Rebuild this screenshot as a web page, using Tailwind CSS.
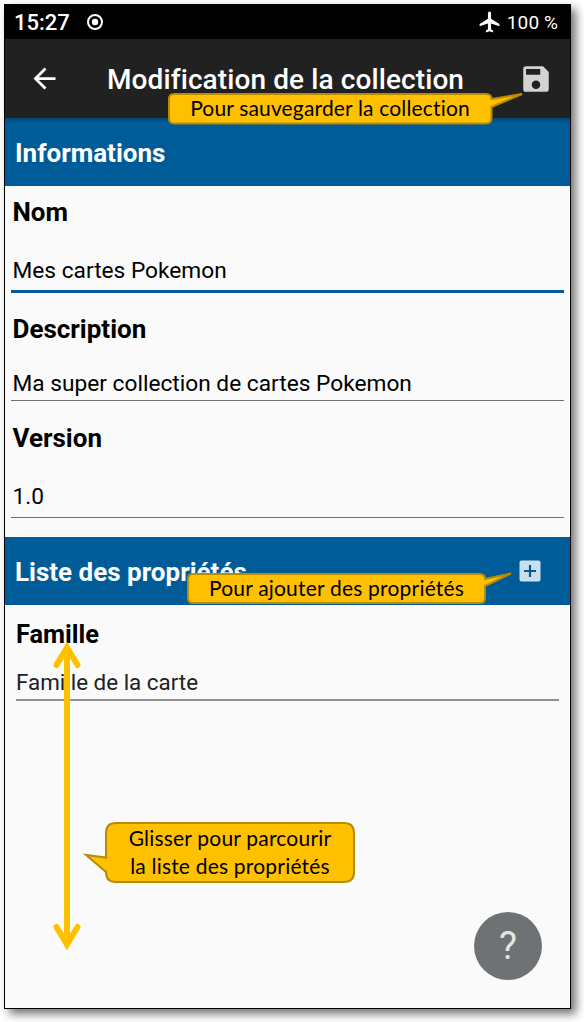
<!DOCTYPE html>
<html lang="fr">
<head>
<meta charset="utf-8">
<title>Modification de la collection</title>
<script src="https://cdn.jsdelivr.net/npm/@tailwindcss/browser@4"></script>
</head>
<body class="bg-white overflow-hidden">
<div class="relative w-[584px] h-[1022px] pl-1 pt-1 font-['Roboto',sans-serif] whitespace-nowrap">
  <main class="w-[567px] h-[1005px] flex flex-col border border-black bg-[#fafafa] shadow-[5px_5px_9px_rgba(0,0,0,0.55)] text-black">
    <div class="h-[34px] shrink-0 bg-black text-white flex items-center pl-[9px] pr-[12px]">
      <span class="text-[22px] leading-[28px] mt-[2px] font-medium w-[73px]">15:27</span>
      <svg class="w-4 h-4" viewBox="0 0 16 16"><circle cx="8" cy="8" r="7" fill="none" stroke="#fff" stroke-width="2"/><circle cx="8" cy="8" r="3.2" fill="#fff"/></svg>
      <svg class="w-[25px] h-[25px] ml-auto mr-[5px]" viewBox="0 0 24 24" fill="#fff"><path d="M21.5 15.5v-2l-8-5V3a1.5 1.5 0 0 0-3 0v5.500l-8 5v2l8-2.500V18.500L8.500 20v1.500l3.500-1 3.500 1V20l-2-1.500V13z"/></svg>
      <span class="text-[19px] leading-[28px] mt-[2px] tracking-[0.1px]">100 %</span>
    </div>
    <header class="h-[79px] shrink-0 bg-[#212121] text-white flex items-center pl-[23px] pr-[17px]">
      <svg class="w-[33px] h-[33px]" viewBox="0 0 24 24" fill="#fff"><path d="M20 11H7.830l5.590-5.590L12 4l-8 8 8 8 1.410-1.410L7.830 13H20v-2z"/></svg>
      <h1 class="ml-[46px] mt-[3px] text-[28px] leading-[32px] tracking-[0.1px] font-medium">Modification de la collection</h1>
      <svg class="ml-auto w-[34px] h-[34px]" viewBox="0 0 24 24"><path fill="#d3d3d3" d="M17 3H5a2 2 0 0 0-2 2v14a2 2 0 0 0 2 2h14a2 2 0 0 0 2-2V7zM12 19a3 3 0 1 1 0-6 3 3 0 0 1 0 6zM15 9H5V5h10z"/></svg>
    </header>
    <section>
      <h2 class="h-[67.5px] bg-[#005c99] bg-linear-to-b from-[#00487a] from-0% to-[#005c99] to-8% text-white font-bold text-[26px] leading-[70px] pl-[10px]">Informations</h2>
      <div class="px-[6px]">
        <h3 class="h-[52.5px] pl-[1.5px] font-bold text-[26px] leading-[52px]">Nom</h3>
        <p class="h-[55px] pl-[1.5px] text-[22.7px] leading-[65px] border-b-3 border-[#005c99]">Mes cartes Pokemon</p>
        <h3 class="h-[72px] pl-[1.5px] font-bold text-[26px] leading-[72px]">Description</h3>
        <p class="h-[36px] pl-[1.5px] text-[22.7px] leading-[38px] border-b border-[#707070]">Ma super collection de cartes Pokemon</p>
        <h3 class="h-[74px] pl-[1.5px] font-bold text-[26px] leading-[75px]">Version</h3>
        <p class="h-[43px] pl-[1.5px] text-[22.7px] leading-[43px] border-b border-[#707070]">1.0</p>
      </div>
    </section>
    <section class="mt-[19px]">
      <div class="h-[68px] bg-[#005c99] text-white flex items-center pl-[10px] pr-[29px]">
        <h2 class="font-bold text-[26px] leading-[68px] mt-px">Liste des propriétés</h2>
        <svg class="ml-auto w-[22px] h-[22px]" viewBox="0 0 22 22"><rect x=".5" y=".5" width="21" height="21" rx="2" fill="#ccdeeb"/><path d="M11 5v12M5 11h12" stroke="#005c99" stroke-width="2.200"/></svg>
      </div>
      <div class="px-[11px]">
        <h3 class="h-[56px] font-bold text-[25.4px] leading-[59px]">Famille</h3>
        <p class="h-[40px] text-[22.4px] leading-[42px] text-[#212121] border-b-2 border-[#909090]">Famille de la carte</p>
      </div>
    </section>
  </main>

  <!-- Help button -->
  <div class="absolute left-[474px] top-[912px] w-[68px] h-[68px] rounded-full bg-[#6e7274] text-[#e4e4e4] flex items-center justify-center text-[38px] font-normal">?</div>

  <!-- Callout shapes and scroll arrow -->
  <svg class="absolute left-0 top-0 w-[584px] h-[1022px]" viewBox="0 0 584 1022">
    <g fill="#ffc000" stroke="#b98b04" stroke-width="2">
      <path d="M174 94H486Q491.500 94 491.500 99L522 94L491.500 107V118Q491.500 123.500 486 123.500H174Q169 123.500 169 118V99Q169 94 174 94Z"/>
      <path d="M193 574H480Q485 574 485 579L511 573.500L485 586V598Q485 603 480 603H193Q188 603 188 598V579Q188 574 193 574Z"/>
      <path d="M116 823H344Q354 823 354 833V872Q354 882 344 882H116Q106 882 106 872L86 855L106 857.500V833Q106 823 116 823Z"/>
    </g>
    <g fill="none" stroke="#ffc000" stroke-linecap="round" stroke-linejoin="miter" stroke-width="6">
      <path d="M56.500 665L67 647.500L77.500 665M56.500 927L67 944.500L77.500 927"/>
      <path stroke-linecap="butt" d="M67 648V944"/>
    </g>
  </svg>
  <div class="absolute left-[169px] top-[94px] w-[322px] h-[30px] text-center font-['Lato',sans-serif] text-[21px] leading-[28px] tracking-[0.16px] [font-variant-ligatures:none]">Pour sauvegarder la collection</div>
  <div class="absolute left-[188px] top-[574px] w-[297px] h-[30px] text-center font-['Lato',sans-serif] text-[21px] leading-[28px] tracking-[0.2px] [font-variant-ligatures:none]">Pour ajouter des propriétés</div>
  <div class="absolute left-[106px] top-[824px] w-[248px] text-center font-['Lato',sans-serif] text-[21px] leading-[28px] tracking-[0.2px] [font-variant-ligatures:none]">Glisser pour parcourir<br>la liste des propriétés</div>
</div>
</body>
</html>
